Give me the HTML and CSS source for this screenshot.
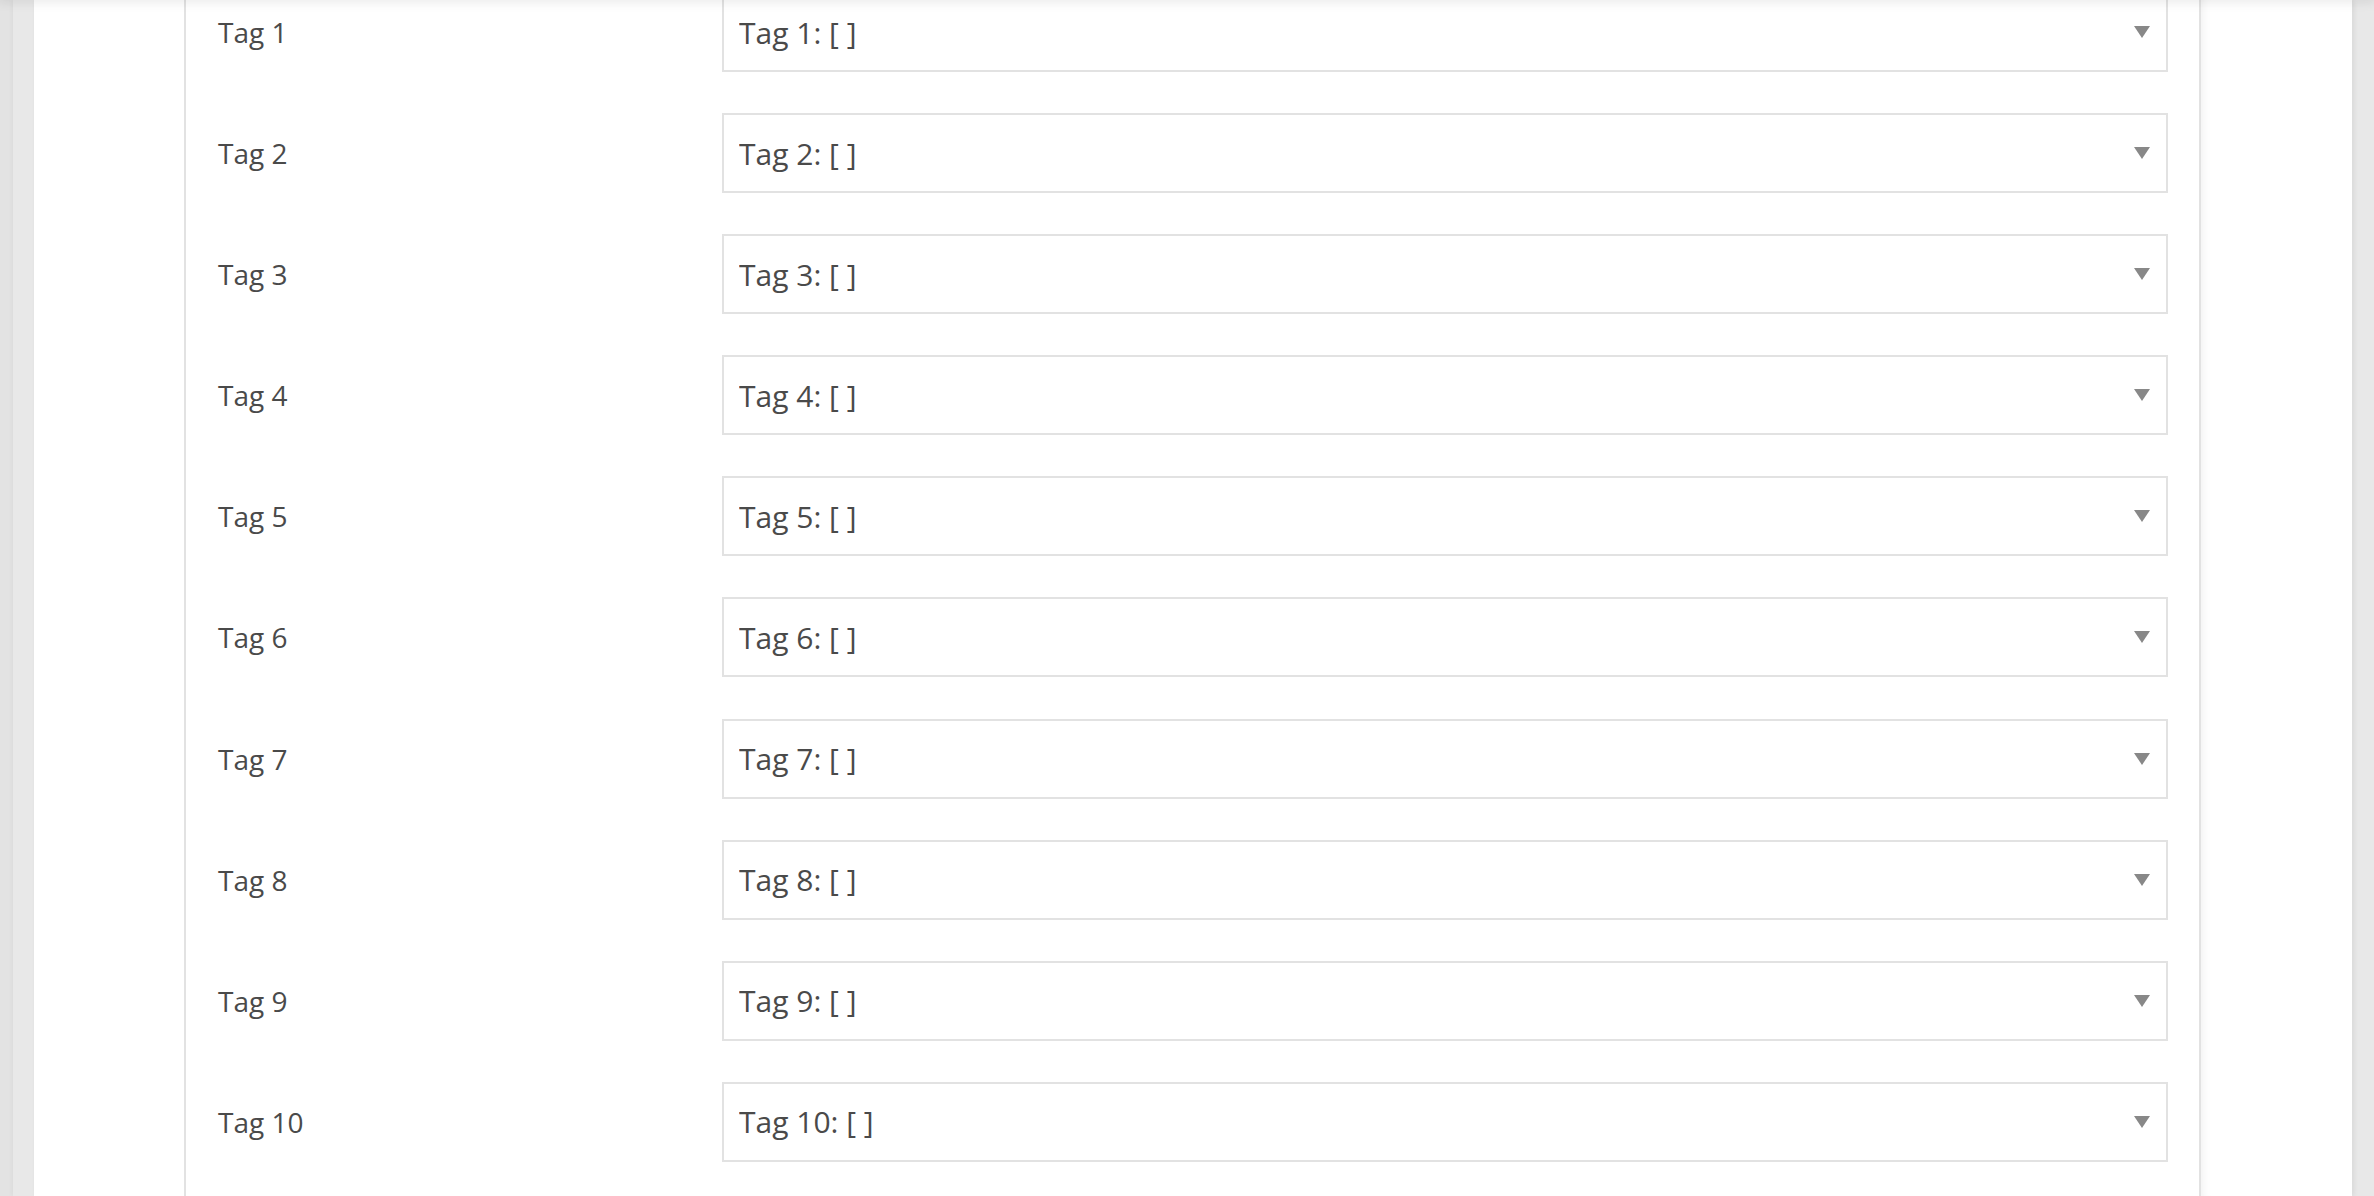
FILE: index.html
```html
<!DOCTYPE html>
<html lang="en">

<head>
    <meta charset="UTF-8">
    <meta name="viewport" content="width=device-width, initial-scale=1.0">
    <title>Tags</title>
    <link rel="stylesheet" href="styles.css">
</head>

<body>
    <div class="topbar"></div>
    <div class="frame">
        <div class="page">
            <div class="gutter"></div>
            <div class="panel">
                <div class="tags">
                    <div class="row">
                        <label class="label" for="tag1">Tag 1</label>
                        <div class="field">
                            <select id="tag1" class="select"><option>Tag 1: [ ]</option></select>
                            <svg class="arrow" viewBox="0 0 16 12"><polygon points="0,0 16,0 8,12" /></svg>
                        </div>
                    </div>
                    <div class="row">
                        <label class="label" for="tag2">Tag 2</label>
                        <div class="field">
                            <select id="tag2" class="select"><option>Tag 2: [ ]</option></select>
                            <svg class="arrow" viewBox="0 0 16 12"><polygon points="0,0 16,0 8,12" /></svg>
                        </div>
                    </div>
                    <div class="row">
                        <label class="label" for="tag3">Tag 3</label>
                        <div class="field">
                            <select id="tag3" class="select"><option>Tag 3: [ ]</option></select>
                            <svg class="arrow" viewBox="0 0 16 12"><polygon points="0,0 16,0 8,12" /></svg>
                        </div>
                    </div>
                    <div class="row">
                        <label class="label" for="tag4">Tag 4</label>
                        <div class="field">
                            <select id="tag4" class="select"><option>Tag 4: [ ]</option></select>
                            <svg class="arrow" viewBox="0 0 16 12"><polygon points="0,0 16,0 8,12" /></svg>
                        </div>
                    </div>
                    <div class="row">
                        <label class="label" for="tag5">Tag 5</label>
                        <div class="field">
                            <select id="tag5" class="select"><option>Tag 5: [ ]</option></select>
                            <svg class="arrow" viewBox="0 0 16 12"><polygon points="0,0 16,0 8,12" /></svg>
                        </div>
                    </div>
                    <div class="row">
                        <label class="label" for="tag6">Tag 6</label>
                        <div class="field">
                            <select id="tag6" class="select"><option>Tag 6: [ ]</option></select>
                            <svg class="arrow" viewBox="0 0 16 12"><polygon points="0,0 16,0 8,12" /></svg>
                        </div>
                    </div>
                    <div class="row">
                        <label class="label" for="tag7">Tag 7</label>
                        <div class="field">
                            <select id="tag7" class="select"><option>Tag 7: [ ]</option></select>
                            <svg class="arrow" viewBox="0 0 16 12"><polygon points="0,0 16,0 8,12" /></svg>
                        </div>
                    </div>
                    <div class="row">
                        <label class="label" for="tag8">Tag 8</label>
                        <div class="field">
                            <select id="tag8" class="select"><option>Tag 8: [ ]</option></select>
                            <svg class="arrow" viewBox="0 0 16 12"><polygon points="0,0 16,0 8,12" /></svg>
                        </div>
                    </div>
                    <div class="row">
                        <label class="label" for="tag9">Tag 9</label>
                        <div class="field">
                            <select id="tag9" class="select"><option>Tag 9: [ ]</option></select>
                            <svg class="arrow" viewBox="0 0 16 12"><polygon points="0,0 16,0 8,12" /></svg>
                        </div>
                    </div>
                    <div class="row">
                        <label class="label" for="tag10">Tag 10</label>
                        <div class="field">
                            <select id="tag10" class="select"><option>Tag 10: [ ]</option></select>
                            <svg class="arrow" viewBox="0 0 16 12"><polygon points="0,0 16,0 8,12" /></svg>
                        </div>
                    </div>
                </div>
            </div>
            <div class="side"></div>
        </div>
    </div>
</body>

</html>
```

FILE: styles.css
```css
* {
    margin: 0;
    padding: 0;
    box-sizing: border-box;
}

html,
body {
    height: 100%;
    overflow: hidden;
}

body {
    background-color: #e3e3e3;
    font-family: "Open Sans", "Liberation Sans", sans-serif;
    color: #4a4a4a;
}

.topbar {
    position: fixed;
    top: -20px;
    left: 0;
    right: 0;
    height: 20px;
    box-shadow: 0 0 12px 2px rgba(0, 0, 0, 0.09);
    z-index: 5;
}

.frame {
    height: 100%;
    margin-left: 13px;
    background-color: #e8e8e8;
    box-shadow: -2px 0 4px rgba(0, 0, 0, 0.03);
}

.page {
    height: 100%;
    margin-left: 21px;
    margin-right: 22px;
    background-color: #fff;
    display: flex;
    box-shadow: 2px 0 5px rgba(0, 0, 0, 0.07);
}

.gutter {
    width: 150px;
    flex-shrink: 0;
}

.panel {
    flex: 1;
    border-left: 2px solid #e2e2e2;
    border-right: 2px solid #e2e2e2;
    padding: 0 31px 0 32px;
}

.side {
    width: 151px;
    flex-shrink: 0;
    box-shadow: inset 10px 0 10px -8px rgba(0, 0, 0, 0.06);
}

.tags {
    margin-top: -8px;
    display: flex;
    flex-direction: column;
    gap: 41.1px;
}

.row {
    display: flex;
    align-items: center;
    height: 80px;
}

.label {
    width: 504px;
    flex-shrink: 0;
    font-size: 28px;
}

.field {
    flex: 1;
    position: relative;
    height: 80px;
}

.select {
    width: 100%;
    height: 100%;
    appearance: none;
    -webkit-appearance: none;
    border: 2px solid #e2e2e2;
    border-radius: 0;
    background-color: #fff;
    padding: 0 60px 0 15px;
    font-family: "Open Sans", "Liberation Sans", sans-serif;
    font-size: 30px;
    color: #4a4a4a;
    outline: none;
}

.arrow {
    position: absolute;
    right: 18px;
    top: 34px;
    width: 16px;
    height: 12px;
    fill: #888;
    pointer-events: none;
}
```
